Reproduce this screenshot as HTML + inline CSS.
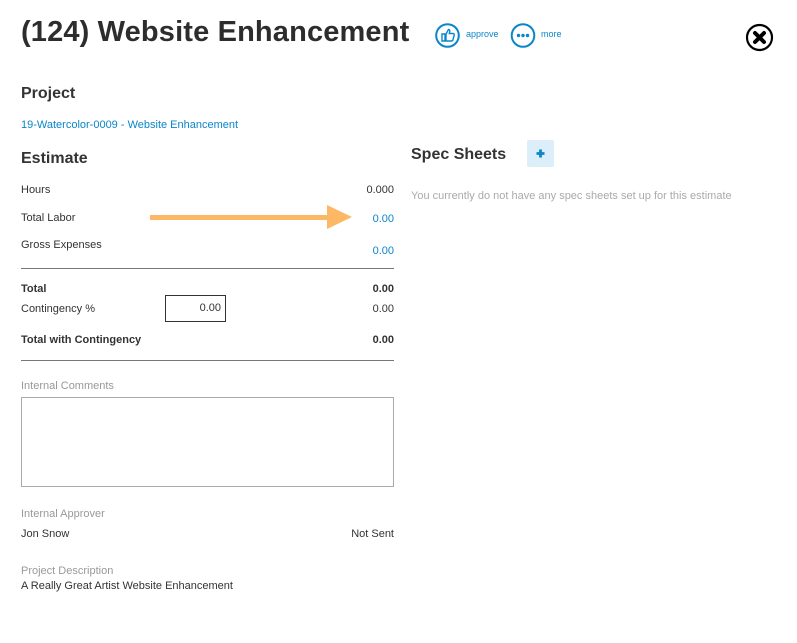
<!DOCTYPE html>
<html><head><meta charset="utf-8"><style>
body{margin:0;width:797px;height:643px;background:#fff;font-family:"Liberation Sans",sans-serif;color:#333;position:relative;overflow:hidden}
.a{position:absolute;white-space:nowrap}
.s{font-size:11px;margin-top:1px}
.h{font-size:16px;font-weight:bold;color:#333;margin-top:1px}
.b{color:#0a86c9}
.g{color:#999}
.r{text-align:right;width:120px}
</style></head><body>
<div class="a" style="left:21px;top:16px;font-size:29px;font-weight:bold;color:#2d2d2d;letter-spacing:0.15px">(124) Website Enhancement</div>
<svg class="a" style="left:435px;top:23px" width="25" height="25" viewBox="0 0 25 25"><circle cx="12.5" cy="12.5" r="11.3" fill="none" stroke="#0a86c9" stroke-width="2"/><path d="M7 11h3v7H7zM11 11l2.5-4.5c1 0 1.5.7 1.3 1.8L14.3 10.5H18c1 0 1.4.8 1.2 1.6l-1.2 4.6c-.2.8-.8 1.3-1.6 1.3H11z" fill="none" stroke="#0a86c9" stroke-width="1.4"/></svg>
<div class="a b" style="left:466px;top:29px;font-size:9px">approve</div>
<svg class="a" style="left:510px;top:23px" width="26" height="25" viewBox="0 0 26 25"><circle cx="13" cy="12.5" r="11.3" fill="none" stroke="#0a86c9" stroke-width="2"/><circle cx="8.5" cy="12.5" r="1.7" fill="#0a86c9"/><circle cx="13" cy="12.5" r="1.7" fill="#0a86c9"/><circle cx="17.5" cy="12.5" r="1.7" fill="#0a86c9"/></svg>
<div class="a b" style="left:541px;top:29px;font-size:9px">more</div>
<svg class="a" style="left:745px;top:23px" width="29" height="29" viewBox="0 0 29 29"><circle cx="14.5" cy="14.5" r="12.5" fill="none" stroke="#000" stroke-width="2.2"/><path d="M10 10l9 9M19 10l-9 9" stroke="#000" stroke-width="4" stroke-linecap="round"/></svg>
<div class="a h" style="left:21px;top:84px">Project</div>
<div class="a s b" style="left:21px;top:118px">19-Watercolor-0009 - Website Enhancement</div>
<div class="a h" style="left:21px;top:149px">Estimate</div>
<div class="a s" style="left:21px;top:183px">Hours</div>
<div class="a s r" style="left:274px;top:183px">0.000</div>
<div class="a s" style="left:21px;top:211px">Total Labor</div>
<div class="a s r b" style="left:274px;top:212px">0.00</div>
<div class="a" style="left:150px;top:215px;width:180px;height:5px;background:#fdb866"></div>
<div class="a" style="left:327px;top:205px;width:0;height:0;border-top:12px solid transparent;border-bottom:12px solid transparent;border-left:25px solid #fdb866"></div>
<div class="a s" style="left:21px;top:238px">Gross Expenses</div>
<div class="a s r b" style="left:274px;top:244px">0.00</div>
<div class="a" style="left:21px;top:268px;width:373px;height:1px;background:#777"></div>
<div class="a s" style="left:21px;top:282px;font-weight:bold">Total</div>
<div class="a s r" style="left:274px;top:282px;font-weight:bold">0.00</div>
<div class="a s" style="left:21px;top:302px">Contingency %</div>
<div class="a s" style="left:165px;top:294px;width:59px;height:25px;border:1px solid #333;text-align:right;line-height:25px"><span style="padding-right:4px">0.00</span></div>
<div class="a s r" style="left:274px;top:302px">0.00</div>
<div class="a s" style="left:21px;top:333px;font-weight:bold">Total with Contingency</div>
<div class="a s r" style="left:274px;top:333px;font-weight:bold">0.00</div>
<div class="a" style="left:21px;top:360px;width:373px;height:1px;background:#777"></div>
<div class="a s g" style="left:21px;top:379px">Internal Comments</div>
<div class="a" style="left:21px;top:397px;width:371px;height:88px;border:1px solid #aaa"></div>
<div class="a s g" style="left:21px;top:507px">Internal Approver</div>
<div class="a s" style="left:21px;top:527px">Jon Snow</div>
<div class="a s r" style="left:274px;top:527px">Not Sent</div>
<div class="a s g" style="left:21px;top:564px">Project Description</div>
<div class="a s" style="left:21px;top:579px">A Really Great Artist Website Enhancement</div>
<div class="a h" style="left:411px;top:145px">Spec Sheets</div>
<div class="a" style="left:527px;top:140px;width:27px;height:27px;background:#dbeefa;border-radius:2px"></div>
<svg class="a" style="left:535px;top:148px" width="11" height="11" viewBox="0 0 11 11"><path d="M5.5 1.5v8M1.5 5.5h8" stroke="#0a86c9" stroke-width="2.8"/></svg>
<div class="a s" style="left:411px;top:189px;color:#aaa">You currently do not have any spec sheets set up for this estimate</div>
</body></html>
